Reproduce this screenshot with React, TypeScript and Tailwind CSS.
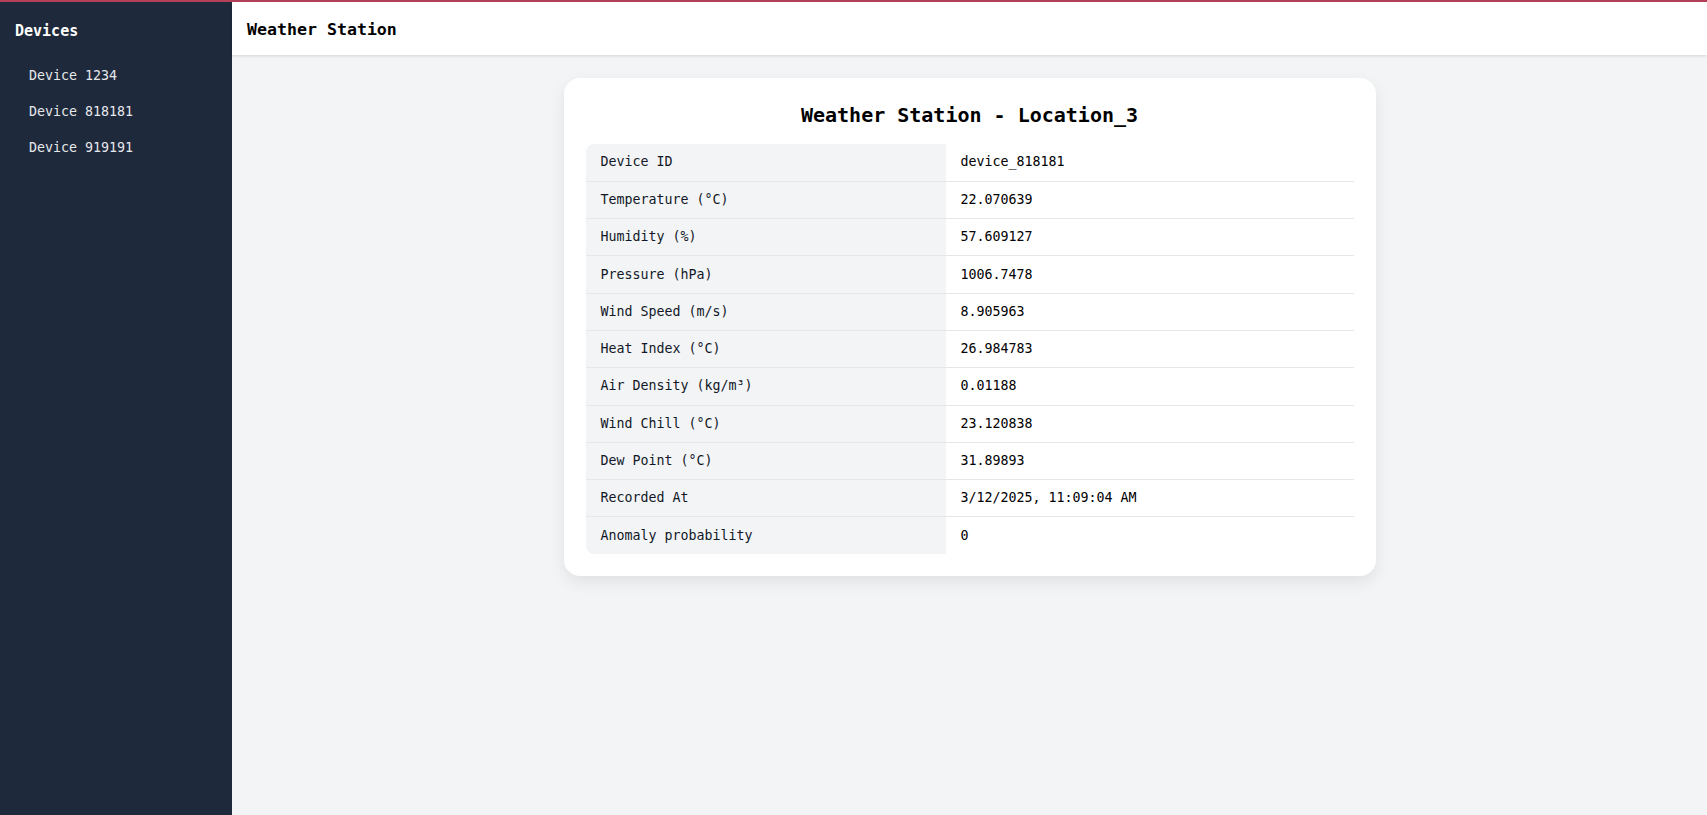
import React from 'react';

const devices = ['Device 1234', 'Device 818181', 'Device 919191'];

const readings: [string, string][] = [
  ['Device ID', 'device_818181'],
  ['Temperature (°C)', '22.070639'],
  ['Humidity (%)', '57.609127'],
  ['Pressure (hPa)', '1006.7478'],
  ['Wind Speed (m/s)', '8.905963'],
  ['Heat Index (°C)', '26.984783'],
  ['Air Density (kg/m³)', '0.01188'],
  ['Wind Chill (°C)', '23.120838'],
  ['Dew Point (°C)', '31.89893'],
  ['Recorded At', '3/12/2025, 11:09:04 AM'],
  ['Anomaly probability', '0'],
];

const mono = "font-['DejaVu_Sans_Mono','Liberation_Mono',monospace]";

export default function App() {
  return (
    <div className={`${mono} h-screen flex flex-col overflow-hidden`}>
      {/* thin accent strip on top */}
      <div className="h-[2px] bg-[#b5405a]" />
      <div className="flex flex-1 min-h-0">
        <aside className="w-[232px] shrink-0 bg-[#1e293b] text-white">
          <h2 className="px-[15px] pt-[19px] pb-[12px] text-[15px] font-bold leading-5">Devices</h2>
          <ul className="mt-[5px]">
            {devices.map(d => (
              <li key={d} className="pl-[29px] h-[36px] flex items-center text-[13.3px] text-[#e5e7eb]">
                {d}
              </li>
            ))}
          </ul>
        </aside>

        <div className="flex-1 flex flex-col bg-[#f3f4f6]">
          <header className="h-[53px] shrink-0 bg-white flex items-center px-[15px] pt-[4px] shadow-[0_1px_3px_rgba(0,0,0,0.12)] relative z-10">
            <h1 className="text-[16.6px] font-bold text-black">Weather Station</h1>
          </header>

          <main className="flex-1 pt-[23px]">
            <div className="w-[812px] mx-auto bg-white rounded-2xl p-[22px] shadow-[0_6px_16px_rgba(0,0,0,0.08)]">
              <h2 className="text-center text-[20px] font-bold text-black leading-7 pt-[1px] pb-[15px]">
                Weather Station - Location_3
              </h2>
              <div className="rounded-lg overflow-hidden">
                <table className="w-full border-collapse text-[13.3px] text-[#111827]">
                  <tbody>
                    {readings.map(([label, value], i) => (
                      <tr key={label} className={i < readings.length - 1 ? 'border-b border-[#e5e7eb]' : ''}>
                        <td className="w-[360px] bg-[#f3f4f6] px-[15px] h-[37.3px] leading-6">{label}</td>
                        <td className="px-[15px] h-[37.3px] leading-6 text-black">{value}</td>
                      </tr>
                    ))}
                  </tbody>
                </table>
              </div>
            </div>
          </main>
        </div>
      </div>
    </div>
  );
}
